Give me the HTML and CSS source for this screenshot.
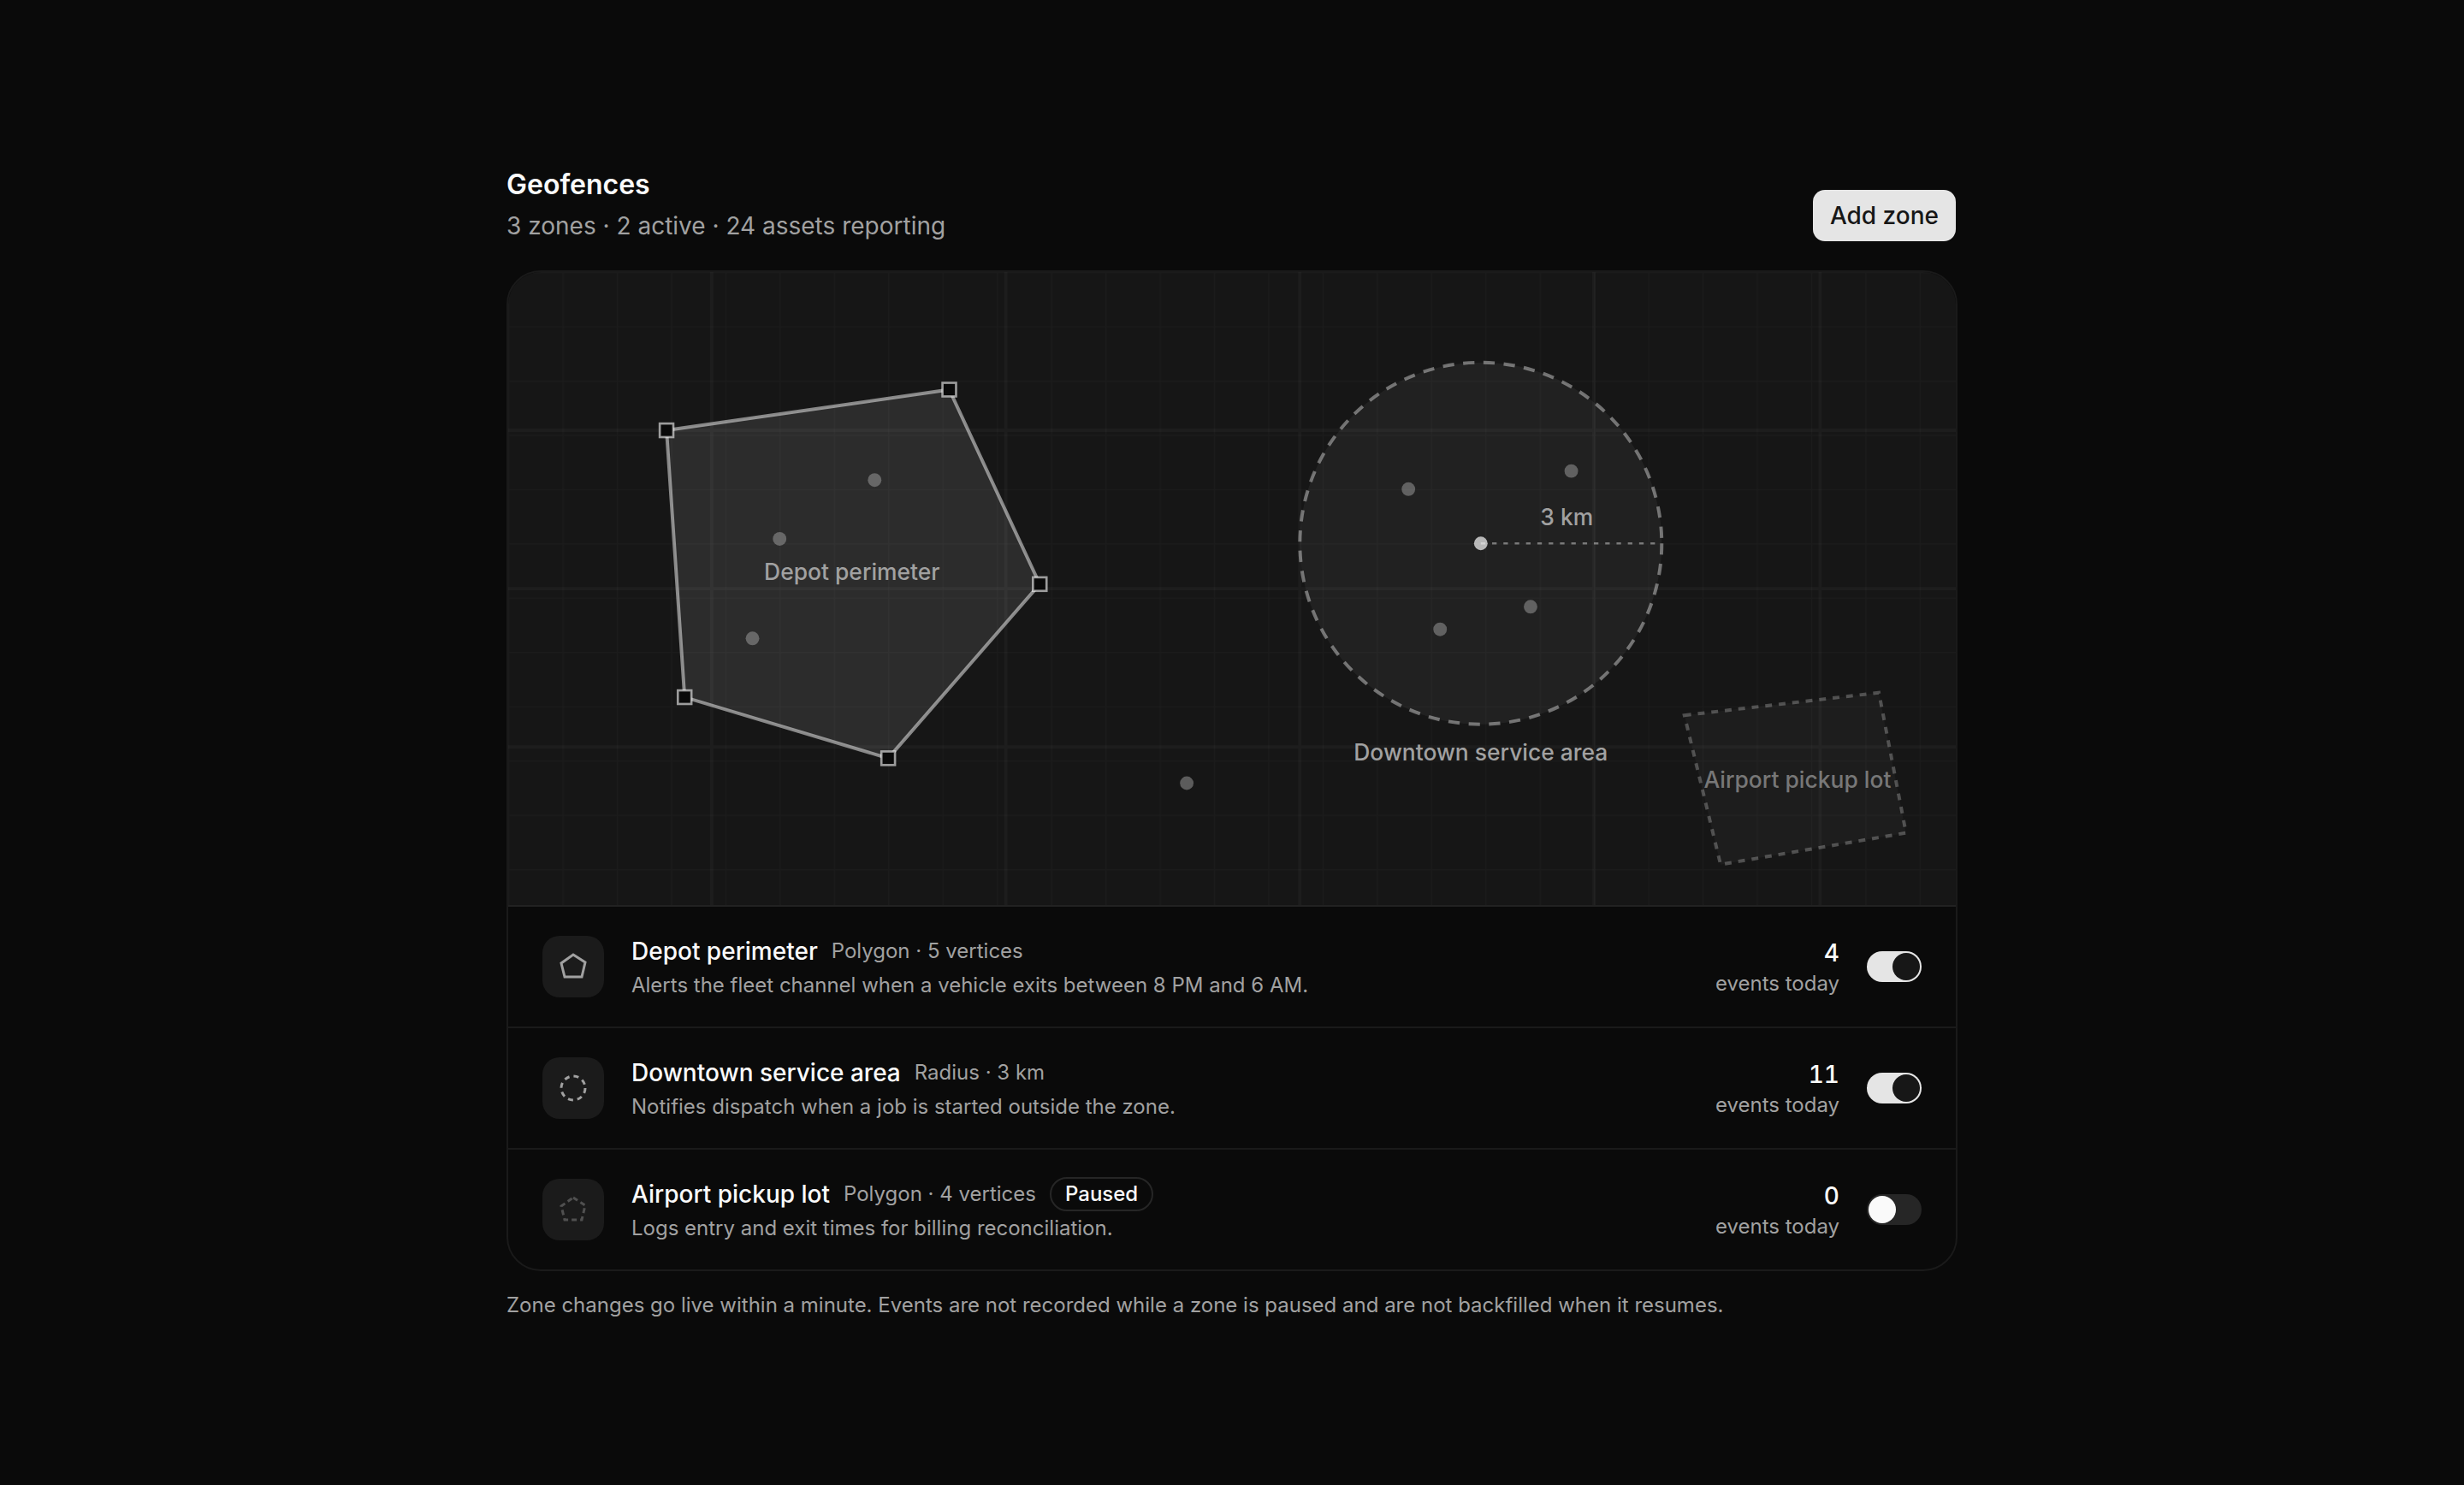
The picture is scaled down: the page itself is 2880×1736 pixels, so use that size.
FILE: index.html
```html
<!DOCTYPE html>
<html lang="en">
<head>
<meta charset="utf-8">
<meta name="viewport" content="width=device-width, initial-scale=1">
<title>Geofences</title>
<link rel="stylesheet" href="styles.css">
</head>
<body>
<main class="page">
  <header class="header">
    <div class="heading">
      <h1 class="title">Geofences</h1>
      <p class="subtitle">3 zones · 2 active · 24 assets reporting</p>
    </div>
    <button class="button" type="button">Add zone</button>
  </header>

  <section class="card">
    <svg class="map" viewBox="0 0 640 280" role="img" aria-label="Map of geofence zones">
      <defs>
        <pattern id="grid" width="24" height="24" patternUnits="userSpaceOnUse">
          <path class="grid-minor" d="M24 0H0V24"/>
        </pattern>
      </defs>
      <rect width="640" height="280" fill="url(#grid)"/>
      <path class="grid-major" d="M0 70H640M0 140H640M0 210H640M90 0V280M220 0V280M350 0V280M480 0V280M580 0V280"/>

      <polygon class="zone-solid" points="70,70 195,52 235,138 168,215 78,188"/>
      <g class="handles">
        <rect x="67" y="67" width="6" height="6"/>
        <rect x="192" y="49" width="6" height="6"/>
        <rect x="232" y="135" width="6" height="6"/>
        <rect x="165" y="212" width="6" height="6"/>
        <rect x="75" y="185" width="6" height="6"/>
      </g>
      <text class="label" x="152" y="136">Depot perimeter</text>

      <circle class="zone-radius" cx="430" cy="120" r="80"/>
      <path class="radius-line" d="M430 120H510"/>
      <circle class="center" cx="430" cy="120" r="3"/>
      <text class="label" x="468" y="112">3 km</text>
      <text class="label" x="430" y="216">Downtown service area</text>

      <polygon class="zone-paused" points="520,196 606,186 618,248 536,262"/>
      <text class="label label-paused" x="570" y="228">Airport pickup lot</text>

      <g class="assets">
        <circle cx="162" cy="92" r="3"/>
        <circle cx="120" cy="118" r="3"/>
        <circle cx="108" cy="162" r="3"/>
        <circle cx="398" cy="96" r="3"/>
        <circle cx="470" cy="88" r="3"/>
        <circle cx="452" cy="148" r="3"/>
        <circle cx="412" cy="158" r="3"/>
        <circle cx="300" cy="226" r="3"/>
      </g>
    </svg>

    <ul class="zones">
      <li class="zone">
        <span class="zone-icon">
          <svg class="icon" viewBox="0 0 20 20" aria-hidden="true"><polygon points="10,3 17,7.5 15,16 5,16 3,8"/></svg>
        </span>
        <div class="zone-info">
          <div class="zone-head">
            <label class="zone-name" for="zone-depot">Depot perimeter</label>
            <span class="meta">Polygon · 5 vertices</span>
          </div>
          <p class="meta">Alerts the fleet channel when a vehicle exits between 8 PM and 6 AM.</p>
        </div>
        <div class="events">
          <p class="count">4</p>
          <p class="meta">events today</p>
        </div>
        <input class="switch" id="zone-depot" type="checkbox" role="switch" checked>
      </li>
      <li class="zone">
        <span class="zone-icon">
          <svg class="icon icon-radius" viewBox="0 0 20 20" aria-hidden="true"><circle cx="10" cy="10" r="7"/></svg>
        </span>
        <div class="zone-info">
          <div class="zone-head">
            <label class="zone-name" for="zone-downtown">Downtown service area</label>
            <span class="meta">Radius · 3 km</span>
          </div>
          <p class="meta">Notifies dispatch when a job is started outside the zone.</p>
        </div>
        <div class="events">
          <p class="count">11</p>
          <p class="meta">events today</p>
        </div>
        <input class="switch" id="zone-downtown" type="checkbox" role="switch" checked>
      </li>
      <li class="zone">
        <span class="zone-icon">
          <svg class="icon icon-paused" viewBox="0 0 20 20" aria-hidden="true"><polygon points="10,3 17,7.5 15,16 5,16 3,8"/></svg>
        </span>
        <div class="zone-info">
          <div class="zone-head">
            <label class="zone-name" for="zone-airport">Airport pickup lot</label>
            <span class="meta">Polygon · 4 vertices</span>
            <span class="badge">Paused</span>
          </div>
          <p class="meta">Logs entry and exit times for billing reconciliation.</p>
        </div>
        <div class="events">
          <p class="count">0</p>
          <p class="meta">events today</p>
        </div>
        <input class="switch" id="zone-airport" type="checkbox" role="switch">
      </li>
    </ul>
  </section>

  <p class="meta">Zone changes go live within a minute. Events are not recorded while a zone is paused and are not backfilled when it resumes.</p>
</main>
</body>
</html>
```
FILE: styles.css
```css
:root {
  --background: #0a0a0a;
  --foreground: #fafafa;
  --muted-foreground: #a1a1a1;
  --primary: #e5e5e5;
  --primary-foreground: #171717;
  --border: #1a1a1a;
}

* {
  box-sizing: border-box;
}

body {
  margin: 0;
  min-height: 100vh;
  display: flex;
  align-items: center;
  justify-content: center;
  background: var(--background);
  color: var(--foreground);
  font-family: Inter, "Liberation Sans", sans-serif;
  font-size: 28px;
  line-height: 40px;
}

h1,
p,
ul {
  margin: 0;
  padding: 0;
}

.page {
  width: 100%;
  max-width: 1696px;
  display: flex;
  flex-direction: column;
  padding-bottom: 2px;
}

.header {
  display: flex;
  align-items: flex-end;
  justify-content: space-between;
  gap: 32px;
  margin-bottom: 32px;
}

.heading {
  display: flex;
  flex-direction: column;
  gap: 4px;
}

.title {
  font-size: 32px;
  line-height: 48px;
  font-weight: 600;
}

.subtitle {
  font-size: 28px;
  line-height: 40px;
  color: var(--muted-foreground);
}

.button {
  height: 64px;
  padding: 0 20px;
  border: 2px solid transparent;
  border-radius: 16px;
  background: var(--primary);
  background-clip: padding-box;
  color: var(--primary-foreground);
  font: inherit;
  font-weight: 500;
}

.card {
  border: 2px solid var(--border);
  border-radius: 40px;
  overflow: hidden;
  margin-bottom: 24px;
}

.map {
  display: block;
  width: 100%;
  height: auto;
  background: #161616;
  fill: none;
}

.grid-minor {
  stroke: #fafafa;
  stroke-opacity: 0.025;
}

.grid-major {
  stroke: #fafafa;
  stroke-opacity: 0.03;
  stroke-width: 1.5px;
}

.zone-solid {
  fill: var(--foreground);
  fill-opacity: 0.1;
  stroke: var(--foreground);
  stroke-opacity: 0.5;
  stroke-width: 1.5px;
}

.handles {
  fill: var(--background);
  stroke: var(--foreground);
  stroke-opacity: 0.6;
}

.zone-radius {
  fill: var(--foreground);
  fill-opacity: 0.05;
  stroke: var(--foreground);
  stroke-opacity: 0.4;
  stroke-width: 1.5px;
  stroke-dasharray: 5 4;
}

.radius-line {
  stroke: var(--foreground);
  stroke-opacity: 0.4;
  stroke-dasharray: 2 3;
}

.center {
  fill: var(--foreground);
  fill-opacity: 0.7;
}

.zone-paused {
  fill: var(--foreground);
  fill-opacity: 0.03;
  stroke: var(--foreground);
  stroke-opacity: 0.25;
  stroke-width: 1.5px;
  stroke-dasharray: 3 3;
}

.assets {
  fill: var(--muted-foreground);
  fill-opacity: 0.5;
}

.label {
  fill: var(--muted-foreground);
  font-size: 10px;
  font-weight: 500;
  text-anchor: middle;
}

.label-paused {
  fill-opacity: 0.7;
}

.zones {
  list-style: none;
}

.zone {
  display: flex;
  align-items: center;
  gap: 32px;
  height: 142px;
  padding: 0 40px;
  border-top: 2px solid var(--border);
}

.zone:first-child {
  border-top-color: #222222;
}

.zone-icon {
  display: flex;
  align-items: center;
  justify-content: center;
  width: 72px;
  height: 72px;
  border-radius: 20px;
  background: #1b1b1b;
}

.icon {
  width: 40px;
  height: 40px;
  fill: none;
  stroke: var(--muted-foreground);
  stroke-width: 1.5px;
}

.icon-radius {
  stroke-dasharray: 3 2.5;
}

.icon-paused {
  stroke-dasharray: 3 2;
  stroke-opacity: 0.4;
}

.zone-info {
  flex: 1;
  min-width: 0;
  display: flex;
  flex-direction: column;
  gap: 4px;
}

.zone-head {
  display: flex;
  align-items: center;
  gap: 16px;
  height: 40px;
}

.zone-name {
  font-weight: 500;
}

.meta {
  font-size: 24px;
  line-height: 32px;
  color: var(--muted-foreground);
}

.badge {
  height: 40px;
  padding: 0 16px;
  border: 2px solid #262626;
  border-radius: 20px;
  font-size: 24px;
  line-height: 36px;
  font-weight: 500;
}

.events {
  text-align: right;
}

.count {
  font-weight: 500;
  font-variant-numeric: tabular-nums;
}

.switch {
  appearance: none;
  width: 64px;
  height: 36px;
  margin: 0;
  padding: 2px;
  border-radius: 18px;
  background: #262626;
}

.switch::before {
  content: "";
  display: block;
  width: 32px;
  height: 32px;
  border-radius: 50%;
  background: var(--foreground);
}

.switch:checked {
  background: var(--primary);
}

.switch:checked::before {
  margin-left: auto;
  background: var(--primary-foreground);
}
```
